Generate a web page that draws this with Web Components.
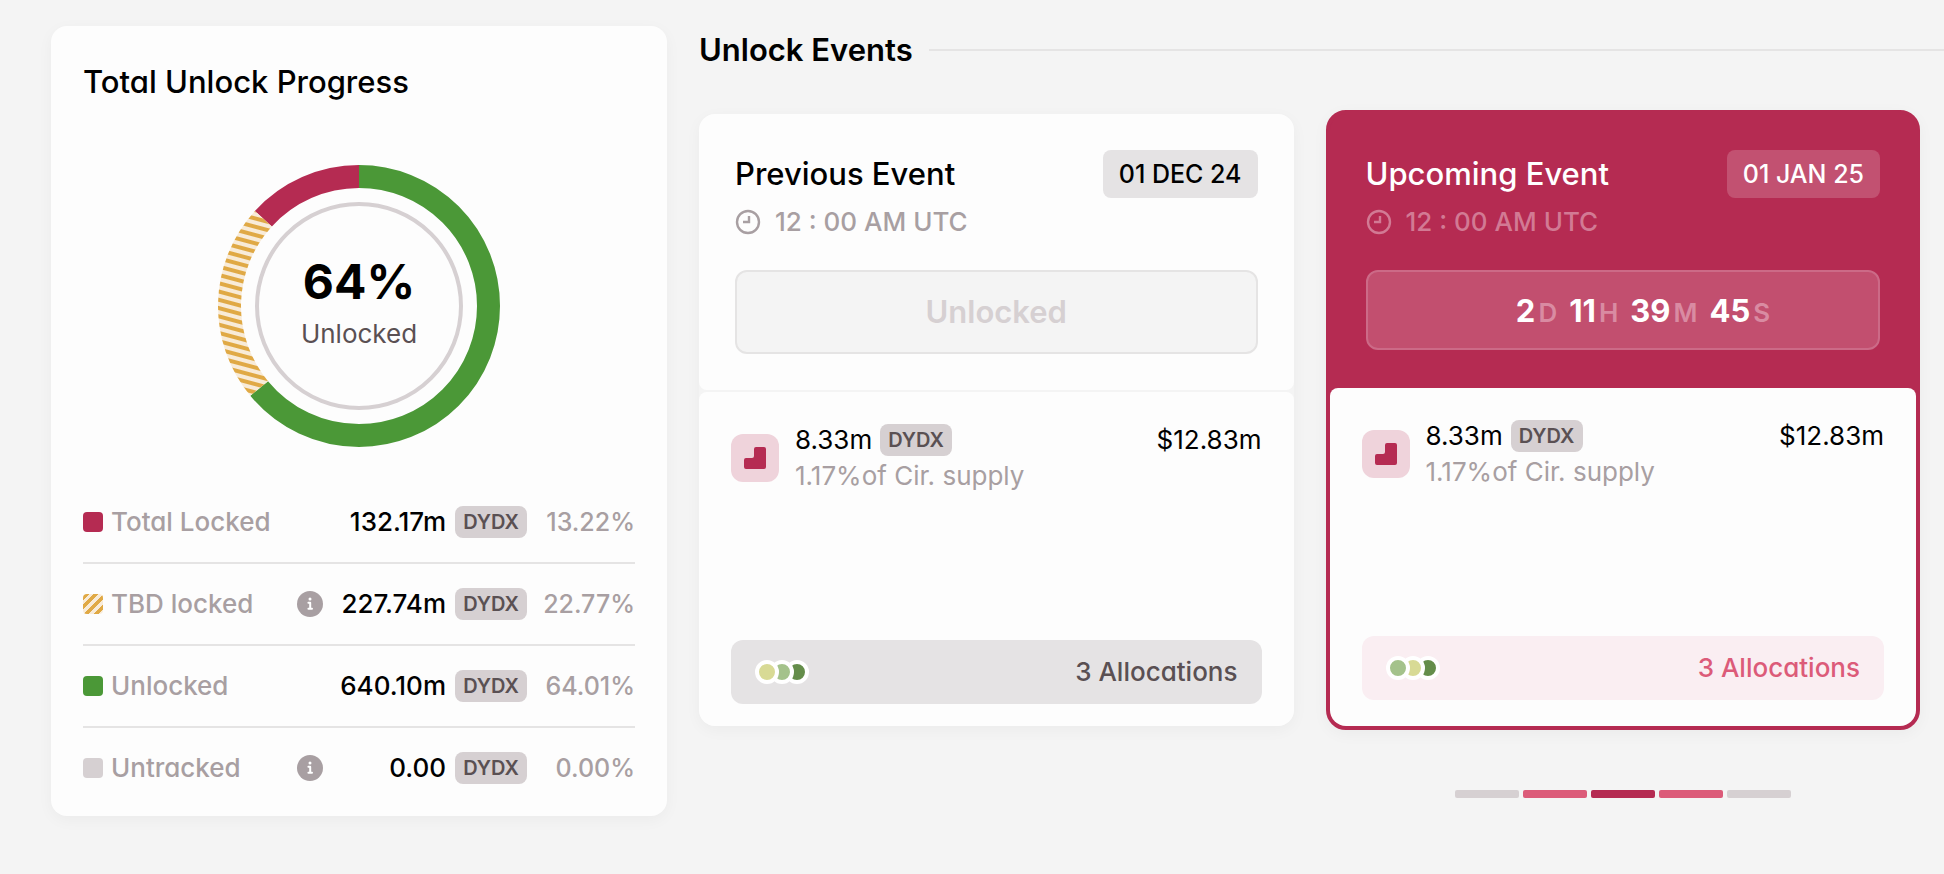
<!DOCTYPE html>
<html lang="en">
<head>
<meta charset="utf-8">
<title>DYDX unlocks</title>
<style>
    :root {
        --brand: #b52b52;
        --brand-light: #dc5b79;
        --brand-tint: #faeef2;
        --green: #4b9837;
        --gold: #e0a945;
        --gold-tint: #f8ebd8;
        --page: #f4f4f4;
        --card: #fdfdfd;
        --line: #e5e4e4;
        --grey: #d6d0d2;
        --muted: #a89fa2;
        --ink: #5a5053;
        --shadow: 0 4px 16px rgba(0, 0, 0, .04);
    }
    body {
        margin: 0;
        background: var(--page);
        color: #000;
        font: 500 26px/32px Inter, "Liberation Sans", sans-serif;
        font-feature-settings: "cv11";
        -webkit-font-smoothing: antialiased;
    }
</style>
</head>
<body>
<unlock-dashboard>
    <unlock-progress slot="aside"></unlock-progress>
    <unlock-events>
        <span slot="title">Unlock Events</span>
        <event-card dots="#d8da95 #a4c28b #648d4a">
            <span slot="title">Previous Event</span>
            <span slot="date">01 DEC 24</span>
            <span slot="state">Unlocked</span>
        </event-card>
        <event-card upcoming dots="#a4c28b #d8da95 #648d4a">
            <span slot="title">Upcoming Event</span>
            <span slot="date">01 JAN 25</span>
            <count-down slot="state" days="2" hours="11" minutes="39" seconds="45"></count-down>
        </event-card>
        <event-pager slot="pager"></event-pager>
    </unlock-events>
</unlock-dashboard>

<script>
const template = (html) => {
    const t = document.createElement('template');
    t.innerHTML = html;
    return t;
};

class BaseElement extends HTMLElement {
    constructor() {
        super();
        this.attachShadow({ mode: 'open' });
        this.shadowRoot.appendChild(this.constructor.template.content.cloneNode(true));
    }
}

class UnlockDashboard extends BaseElement {
    static template = template(`
        <style>
            :host {
                display: grid;
                grid-template-columns: 616fr 1245fr;
                gap: 32px;
                align-items: start;
                padding: 26px 0 26px 51px;
            }
        </style>
        <slot name="aside"></slot>
        <slot></slot>
    `);
}

class TokenBadge extends BaseElement {
    static template = template(`
        <style>
            :host {
                display: inline-block;
                padding: 0 8px;
                border-radius: 8px;
                background: var(--grey);
                color: var(--ink);
                font-size: 20px;
                font-weight: 600;
                line-height: 32px;
                vertical-align: top;
            }
        </style>
        <slot>DYDX</slot>
    `);
}

class UnlockDonut extends BaseElement {
    static template = template(`
        <style>
            :host {
                display: grid;
                justify-items: center;
                align-items: center;
            }
            svg, .label {
                grid-area: 1 / 1;
            }
            svg {
                width: 282px;
                height: 282px;
            }
            .label {
                padding-bottom: 8px;
                text-align: center;
                color: var(--ink);
                font-weight: 400;
            }
            strong {
                display: block;
                margin-bottom: 8px;
                color: #000;
                font-size: 48px;
                font-weight: 700;
                line-height: 56px;
            }
        </style>
        <svg viewBox="0 0 282 282" aria-hidden="true">
            <defs>
                <pattern id="hatch" width="8" height="8" patternUnits="userSpaceOnUse" patternTransform="rotate(15)">
                    <rect width="8" height="8" fill="#f8ebd8"></rect>
                    <rect width="8" height="4" fill="#e0a945"></rect>
                </pattern>
            </defs>
            <g fill="none" stroke-width="23" transform="rotate(-90 141 141)">
                <circle cx="141" cy="141" r="129.5" pathLength="100" stroke="#4b9837" stroke-dasharray="64.01 100"></circle>
                <circle cx="141" cy="141" r="129.5" pathLength="100" stroke="#b52b52" stroke-dasharray="13.22 100" stroke-dashoffset="-86.78"></circle>
            </g>
            <path class="tbd" fill="url(#hatch)"></path>
            <circle cx="141" cy="141" r="102" fill="none" stroke="#d6d0d2" stroke-width="4"></circle>
        </svg>
        <div class="label"><strong>64%</strong>Unlocked</div>
    `);

    constructor() {
        super();
        this.shadowRoot.querySelector('.tbd').setAttribute('d', this.segment(64.01, 86.78, 141, 118));
    }

    // ring segment between two percentages, clockwise from the top
    segment(from, to, outer, inner) {
        const point = (pct, r) => {
            const a = pct / 100 * 2 * Math.PI;
            return (141 + r * Math.sin(a)).toFixed(2) + ' ' + (141 - r * Math.cos(a)).toFixed(2);
        };
        return `M${point(from, outer)} A${outer} ${outer} 0 0 1 ${point(to, outer)}
            L${point(to, inner)} A${inner} ${inner} 0 0 0 ${point(from, inner)} Z`;
    }
}

class UnlockProgress extends BaseElement {
    static template = template(`
        <style>
            :host {
                display: block;
                padding: 36px 32px 8px;
                border-radius: 16px;
                background: var(--card);
                box-shadow: var(--shadow);
            }
            h2 {
                margin: 0 0 63px;
                font-size: 31px;
                font-weight: 500;
                line-height: 40px;
            }
            table {
                width: 100%;
                margin-top: 35px;
                border-collapse: collapse;
            }
            tr + tr {
                border-top: 2px solid var(--line);
            }
            th, td {
                height: 80px;
                padding: 0;
                text-align: right;
                white-space: nowrap;
            }
            th {
                color: var(--muted);
                font-weight: 500;
                text-align: left;
            }
            th span {
                display: flex;
                align-items: center;
                gap: 8px;
            }
            i {
                width: 20px;
                height: 20px;
                border-radius: 4px;
                background: var(--swatch);
            }
            .info {
                width: 26px;
            }
            .amount {
                width: 123px;
            }
            .token {
                width: 81px;
            }
            .share {
                width: 108px;
                color: var(--muted);
                font-size: 25px;
            }
            button {
                display: block;
                padding: 0;
                border: 0;
                background: none;
            }
            svg {
                display: block;
            }
        </style>
        <h2>Total Unlock Progress</h2>
        <unlock-donut></unlock-donut>
        <table><tbody></tbody></table>
    `);

    static rows = [
        ['Total Locked', 'var(--brand)', '132.17m', '13.22%'],
        ['TBD locked', 'repeating-linear-gradient(-45deg, var(--gold-tint) 0 3px, var(--gold) 3px 7px)', '227.74m', '22.77%', true],
        ['Unlocked', 'var(--green)', '640.10m', '64.01%'],
        ['Untracked', 'var(--grey)', '0.00', '0.00%', true],
    ];

    constructor() {
        super();
        const info = `<button type="button" aria-label="More information">
            <svg width="26" height="26" viewBox="0 0 26 26">
                <circle cx="13" cy="13" r="13" fill="#a89fa2"></circle>
                <circle cx="13" cy="8" r="1.5" fill="#fff"></circle>
                <path d="M11.4 11.8h1.8v5.6M11.4 17.8h3.6" fill="none" stroke="#fff" stroke-width="2" stroke-linecap="round" stroke-linejoin="round"></path>
            </svg>
        </button>`;
        this.shadowRoot.querySelector('tbody').innerHTML = UnlockProgress.rows.map(([name, swatch, amount, share, hint]) => `
            <tr>
                <th scope="row"><span><i style="--swatch: ${swatch}"></i>${name}</span></th>
                <td class="info">${hint ? info : ''}</td>
                <td class="amount">${amount}</td>
                <td class="token"><token-badge></token-badge></td>
                <td class="share">${share}</td>
            </tr>`).join('');
    }
}

class UnlockEvents extends BaseElement {
    static template = template(`
        <style>
            :host {
                display: block;
            }
            header {
                display: flex;
                align-items: center;
                gap: 16px;
                margin-bottom: 36px;
            }
            header::after {
                content: "";
                flex: 1;
                height: 2px;
                background: var(--line);
            }
            h2 {
                margin: 0;
                font-size: 31px;
                font-weight: 600;
                line-height: 48px;
            }
            .cards {
                display: grid;
                grid-template-columns: 1fr 1fr;
                align-items: center;
                gap: 60px 32px;
                padding-right: 24px;
            }
            slot[name="pager"]::slotted(*) {
                grid-column: 2;
                justify-self: center;
            }
        </style>
        <header><h2><slot name="title"></slot></h2></header>
        <div class="cards">
            <slot></slot>
            <slot name="pager"></slot>
        </div>
    `);
}

class EventCard extends BaseElement {
    static template = template(`
        <style>
            :host {
                display: grid;
                gap: 2px;
                border-radius: 16px;
                box-shadow: var(--shadow);
            }
            header {
                padding: 36px;
                border-radius: 16px 16px 8px 8px;
                background: var(--card);
            }
            .top, .row, button {
                display: flex;
                justify-content: space-between;
            }
            .top {
                align-items: center;
            }
            h3 {
                margin: 0;
                font-size: 31px;
                font-weight: 500;
                line-height: 40px;
            }
            .date {
                padding: 0 16px;
                border-radius: 8px;
                background: #e5e3e4;
                font-size: 25px;
                line-height: 48px;
            }
            .time {
                display: flex;
                align-items: center;
                gap: 14px;
                margin: 8px 0 32px;
                color: var(--muted);
            }
            .state {
                display: flex;
                align-items: center;
                justify-content: center;
                box-sizing: border-box;
                height: 84px;
                border: 2px solid var(--line);
                border-radius: 12px;
                background: var(--page);
                color: var(--grey);
                font-size: 31px;
                font-weight: 600;
            }
            .body {
                padding: 32px 32px 22px;
                border-radius: 8px 8px 16px 16px;
                background: var(--card);
            }
            .row {
                margin-bottom: 148px;
                font-weight: 400;
            }
            .token {
                display: grid;
                grid-template-columns: 48px auto;
                align-items: center;
                column-gap: 16px;
            }
            .token svg {
                border-radius: 12px;
                background: #efd3db;
            }
            .amount {
                display: flex;
                gap: 8px;
                margin-bottom: 4px;
            }
            .supply {
                color: var(--muted);
            }
            button {
                align-items: center;
                width: 100%;
                height: 64px;
                padding: 0 24px;
                border: 0;
                border-radius: 12px;
                background: #e5e3e4;
                color: var(--ink);
                font: inherit;
                font-feature-settings: inherit;
            }
            .dots {
                display: flex;
            }
            .dots i {
                width: 16px;
                height: 16px;
                border: 4px solid #fff;
                border-radius: 50%;
            }
            .dots i + i {
                margin-left: -9px;
            }
            :host([upcoming]) {
                gap: 0;
                border: 4px solid var(--brand);
                border-radius: 20px;
                background: var(--brand);
            }
            :host([upcoming]) header {
                padding-bottom: 38px;
                background: none;
                color: #fff;
            }
            :host([upcoming]) .date {
                background: rgba(255, 255, 255, .18);
            }
            :host([upcoming]) .time {
                color: #d27a94;
            }
            :host([upcoming]) .state {
                height: 80px;
                padding-top: 4px;
                border-color: #cc6a87;
                background: #c24f6f;
                color: #fff;
            }
            :host([upcoming]) .body {
                padding-bottom: 26px;
            }
            :host([upcoming]) button {
                background: var(--brand-tint);
                color: var(--brand-light);
            }
        </style>
        <header>
            <div class="top">
                <h3><slot name="title"></slot></h3>
                <span class="date"><slot name="date"></slot></span>
            </div>
            <div class="time">
                <svg width="26" height="26" viewBox="0 0 26 26" fill="none" stroke="currentColor" stroke-width="2.4">
                    <circle cx="13" cy="13" r="11"></circle>
                    <path d="M14 7v6H8"></path>
                </svg>
                <span>12 : 00 AM UTC</span>
            </div>
            <div class="state"><slot name="state"></slot></div>
        </header>
        <div class="body">
            <div class="row">
                <div class="token">
                    <svg width="48" height="48" viewBox="0 0 48 48">
                        <path d="M25 13h8a2 2 0 0 1 2 2v18a2 2 0 0 1-2 2H15a2 2 0 0 1-2-2v-7a2 2 0 0 1 2-2h6a2 2 0 0 0 2-2v-7a2 2 0 0 1 2-2z" fill="#b52b52"></path>
                    </svg>
                    <div>
                        <div class="amount">8.33m <token-badge></token-badge></div>
                        <div class="supply">1.17%of Cir. supply</div>
                    </div>
                </div>
                <span>$12.83m</span>
            </div>
            <button type="button"><span class="dots"></span><span>3 Allocations</span></button>
        </div>
    `);

    connectedCallback() {
        // each dot covers the edge of the one after it
        this.shadowRoot.querySelector('.dots').innerHTML = this.getAttribute('dots').split(' ')
            .map((color, i) => `<i style="background: ${color}; z-index: ${3 - i}"></i>`).join('');
    }
}

class CountDown extends BaseElement {
    static template = template(`
        <style>
            :host {
                display: flex;
                align-items: baseline;
                gap: 12px;
            }
            span {
                display: flex;
                align-items: baseline;
                gap: 3px;
            }
            b {
                font-weight: 700;
            }
            .days {
                min-width: 60px;
                text-align: right;
            }
            small {
                color: #d98ba2;
                font-size: 26px;
                font-weight: 600;
            }
        </style>
        <span><b class="days"></b><small>D</small></span>
        <span><b class="hours"></b><small>H</small></span>
        <span><b class="minutes"></b><small>M</small></span>
        <span><b class="seconds"></b><small>S</small></span>
    `);

    connectedCallback() {
        ['days', 'hours', 'minutes', 'seconds'].forEach(unit => {
            this.shadowRoot.querySelector('.' + unit).textContent = this.getAttribute(unit);
        });
    }
}

class EventPager extends BaseElement {
    static template = template(`
        <style>
            :host {
                display: flex;
                gap: 4px;
            }
            button {
                width: 64px;
                height: 8px;
                padding: 0;
                border: 0;
                border-radius: 2px;
                background: var(--grey);
            }
            .near {
                background: var(--brand-light);
            }
            .current {
                background: var(--brand);
            }
        </style>
        <button type="button" aria-label="Event 1"></button>
        <button type="button" aria-label="Event 2" class="near"></button>
        <button type="button" aria-label="Event 3" class="current"></button>
        <button type="button" aria-label="Event 4" class="near"></button>
        <button type="button" aria-label="Event 5"></button>
    `);
}

customElements.define('token-badge', TokenBadge);
customElements.define('unlock-donut', UnlockDonut);
customElements.define('unlock-progress', UnlockProgress);
customElements.define('count-down', CountDown);
customElements.define('event-card', EventCard);
customElements.define('event-pager', EventPager);
customElements.define('unlock-events', UnlockEvents);
customElements.define('unlock-dashboard', UnlockDashboard);
</script>
</body>
</html>
